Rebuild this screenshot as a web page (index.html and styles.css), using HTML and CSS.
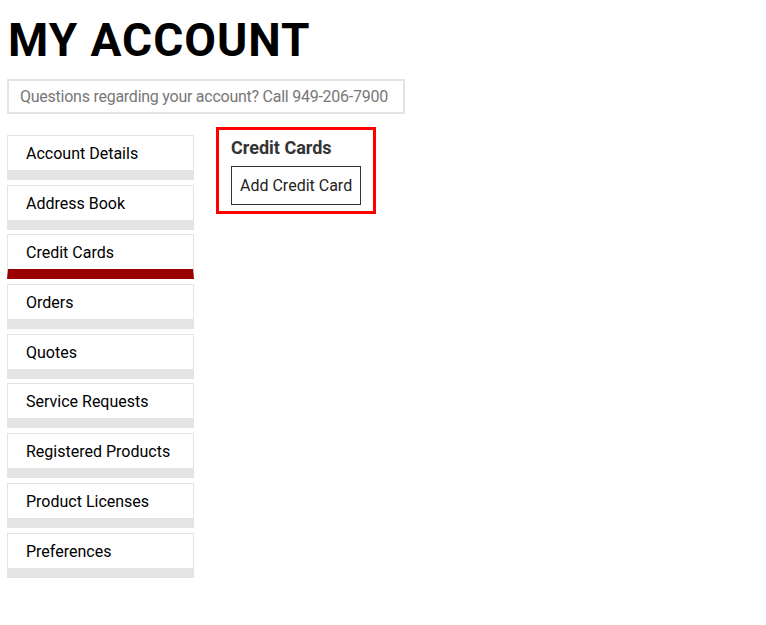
FILE: index.html
```html
<!DOCTYPE html>
<html lang="en">
<head>
  <meta charset="UTF-8">
  <meta name="viewport" content="width=device-width, initial-scale=1">
  <title>My Account</title>
  <link rel="stylesheet" href="styles.css">
</head>
<body>

<div class="account-page">
  <h1>MY ACCOUNT</h1>

  <input type="text" class="account-question" placeholder="Questions regarding your account? Call 949-206-7900">

  <div class="account-body">
    <ul class="account-nav">
      <li><a href="#">Account Details</a></li>
      <li><a href="#">Address Book</a></li>
      <li class="active"><a href="#">Credit Cards</a></li>
      <li><a href="#">Orders</a></li>
      <li><a href="#">Quotes</a></li>
      <li><a href="#">Service Requests</a></li>
      <li><a href="#">Registered Products</a></li>
      <li><a href="#">Product Licenses</a></li>
      <li><a href="#">Preferences</a></li>
    </ul>

    <div class="account-content">
      <h3>Credit Cards</h3>
      <button type="button" class="add-card">Add Credit Card</button>
    </div>
  </div>
</div>

</body>
</html>
```

FILE: styles.css
```css
body {
  font-family: Roboto, "Liberation Sans", sans-serif;
  background-color: #fff;
  color: #111;
  margin: 0;
}

.account-page {
  padding: 0 7px;
}

h1 {
  font-size: 46px;
  font-weight: bold;
  letter-spacing: 1px;
  line-height: 1;
  margin: 0;
  padding: 17px 0 0 1px;
  height: 64px;
  box-sizing: border-box;
  color: #000;
}

.account-question {
  display: block;
  width: 398px;
  height: 35px;
  box-sizing: border-box;
  border: 2px solid #e4e4e4;
  padding: 0 11px;
  font-family: inherit;
  font-size: 16px;
  letter-spacing: -0.25px;
  margin: 15px 0 0;
  outline: none;
}

.account-question::placeholder {
  color: #777;
}

.account-body {
  display: flex;
  align-items: flex-start;
  margin-top: 21px;
}

.account-nav {
  list-style: none;
  margin: 0;
  padding: 0;
  width: 187px;
  display: flex;
  flex-direction: column;
  gap: 4.7px;
}

.account-nav li {
  border: 1px solid #e4e4e4;
  border-bottom: 10px solid #e4e4e4;
  height: 34px;
  background: #fff;
}

.account-nav li.active {
  border-bottom-color: #990000;
}

.account-nav a {
  display: block;
  padding: 8px 0 0 18px;
  color: #000;
  font-size: 16px;
  font-weight: 400;
  text-decoration: none;
}

.account-content {
  margin: -8px 0 0 22px;
  border: 3px solid #f00;
  padding: 7px 12px 6px 12px;
}

.account-content h3 {
  font-size: 18px;
  font-weight: bold;
  color: #333;
  margin: 0 0 8px;
}

.add-card {
  display: block;
  background: #fff;
  border: 1px solid #333;
  padding: 0 8px;
  height: 39px;
  font-family: inherit;
  font-size: 16px;
  color: #222;
  cursor: pointer;
}
```
